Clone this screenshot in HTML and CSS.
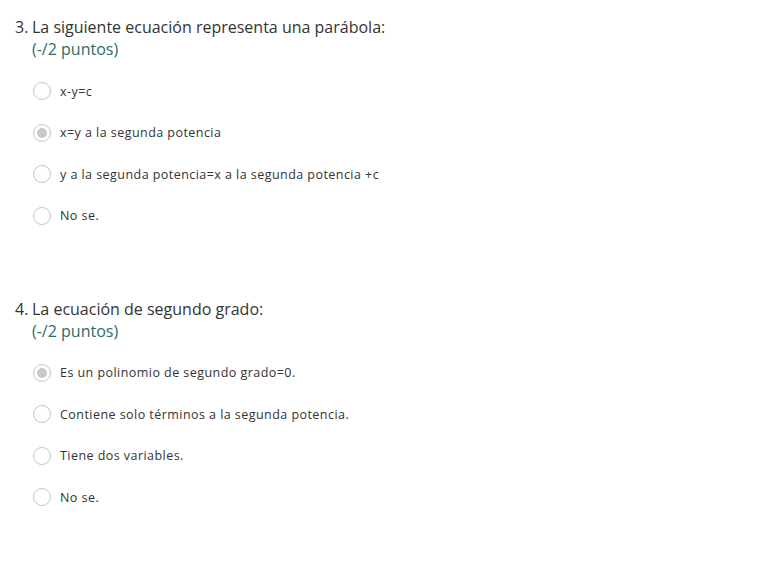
FILE: index.html
```html
<!DOCTYPE html>
<html lang="es">
<head>
<meta charset="utf-8">
<link rel="stylesheet" href="styles.css">
</head>
<body>
<div class="form">
  <section class="question">
    <div class="q-head">
      <span class="q-num">3.</span>
      <div class="q-text">
        <div class="q-title">La siguiente ecuación representa una parábola:</div>
        <div class="q-points">(-/2 puntos)</div>
      </div>
    </div>
    <ul class="options">
      <li class="option"><span class="radio"></span><span class="label">x-y=c</span></li>
      <li class="option"><span class="radio checked"></span><span class="label">x=y a la segunda potencia</span></li>
      <li class="option"><span class="radio"></span><span class="label">y a la segunda potencia=x a la segunda potencia +c</span></li>
      <li class="option"><span class="radio"></span><span class="label">No se.</span></li>
    </ul>
  </section>
  <section class="question">
    <div class="q-head">
      <span class="q-num">4.</span>
      <div class="q-text">
        <div class="q-title">La ecuación de segundo grado:</div>
        <div class="q-points">(-/2 puntos)</div>
      </div>
    </div>
    <ul class="options">
      <li class="option"><span class="radio checked"></span><span class="label">Es un polinomio de segundo grado=0.</span></li>
      <li class="option"><span class="radio"></span><span class="label">Contiene solo términos a la segunda potencia.</span></li>
      <li class="option"><span class="radio"></span><span class="label">Tiene dos variables.</span></li>
      <li class="option"><span class="radio"></span><span class="label">No se.</span></li>
    </ul>
  </section>
</div>
</body>
</html>
```
FILE: styles.css
```css
html, body {
  margin: 0;
  padding: 0;
  background: #ffffff;
}
body {
  font-family: "Open Sans", "Noto Sans", sans-serif;
  color: #333333;
}
.form {
  padding: 16px 0 0 15px;
  display: flex;
  flex-direction: column;
  gap: 72px;
}
.q-head {
  display: flex;
  font-size: 16px;
  line-height: 22px;
}
.q-num {
  width: 17px;
  flex: none;
}
.q-points {
  color: #2b6d69;
}
.options {
  list-style: none;
  margin: 21px 0 0 0;
  padding: 0 0 0 18px;
  display: flex;
  flex-direction: column;
  gap: 21.5px;
}
.option {
  display: flex;
  align-items: center;
  height: 20px;
  font-size: 12.5px;
  letter-spacing: 0.45px;
}
.radio {
  box-sizing: border-box;
  width: 18px;
  height: 18px;
  border: 1px solid #c6c6c6;
  border-radius: 50%;
  background: #fff;
  margin-right: 9px;
  display: flex;
  align-items: center;
  justify-content: center;
}
.radio.checked::after {
  content: "";
  width: 10px;
  height: 10px;
  border-radius: 50%;
  background: #c8c8c8;
}
.label {
  color: #333;
}
```
